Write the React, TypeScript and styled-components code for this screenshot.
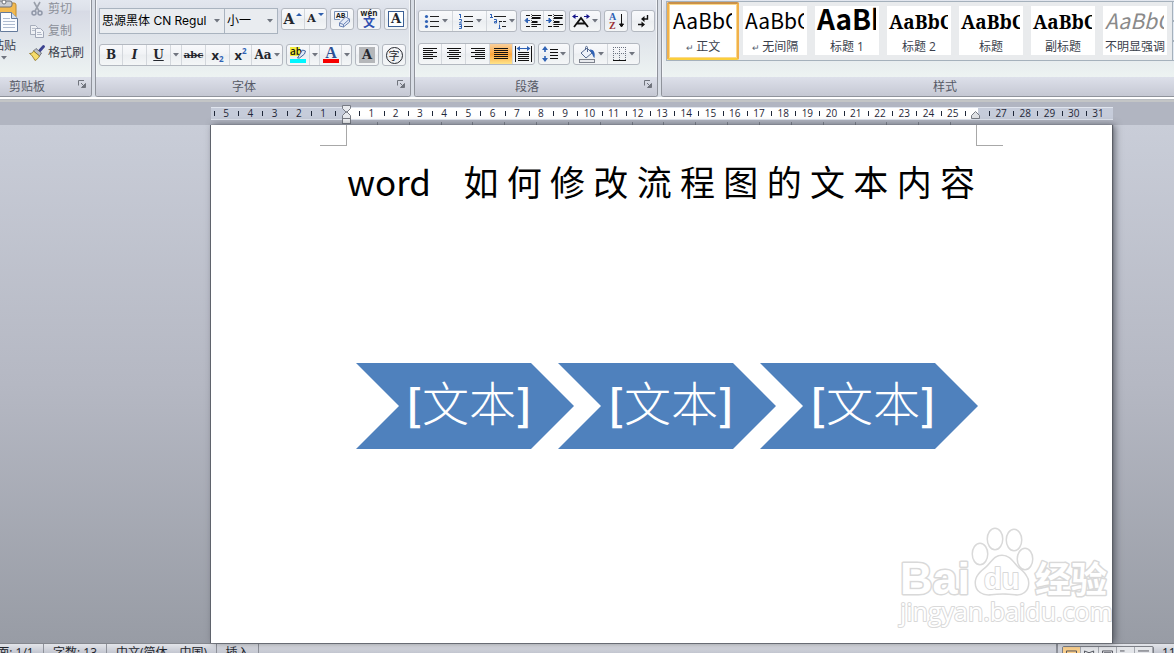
import React from "react";
import styled, { createGlobalStyle, css } from "styled-components";

const UI_FONT = '"Open Sans", "Noto Sans CJK SC", sans-serif';

const GlobalStyle = createGlobalStyle`
  *, *::before, *::after { box-sizing: border-box; }
  body { margin: 0; font-family: ${UI_FONT}; font-size: 12px; color: #3b3f4c; }
  button, select { font: inherit; color: inherit; }
`;

const Window = styled.div`
  display: flex;
  flex-direction: column;
  height: 100vh;
  overflow: hidden;
`;

/* ---------- Ribbon ---------- */

const Ribbon = styled.header`
  display: flex;
  gap: 3px;
  flex: none;
  height: 102px;
  margin-left: -20px;
  padding-bottom: 5px;
  overflow: hidden;
  background: linear-gradient(#d9dee6 0 97px, #ffffff 97px 99px, #b9bdc2 99px 100px, #c3c5c6 100px);
`;

const Group = styled.section<{ $width: number; $grow?: boolean }>`
  display: flex;
  flex-direction: column;
  flex: ${(p) => (p.$grow ? 1 : 0)} 0 ${(p) => p.$width}px;
  border: solid #8f939b;
  border-width: 0 1px 1px;
  border-radius: 0 0 3px 3px;
  overflow: hidden;
  background: linear-gradient(#e3e7ef 0, #dde1ea 10px, #d7dae5 11px, #e4e9ed 50px, #edf3f2 77px);
  box-shadow: inset 1px 0 #f3f5f8, inset -1px 0 #f3f5f8;
`;

const GroupBody = styled.div<{ $top: number; $gap: number }>`
  display: flex;
  flex-direction: column;
  height: 77px;
  gap: ${(p) => p.$gap}px;
  padding: ${(p) => p.$top}px 3px 0;
`;

const GroupFooter = styled.div`
  display: flex;
  align-items: center;
  height: 19px;
  padding-right: 5px;
  background: linear-gradient(#dde0ea, #c5c8d3);
`;

const GroupTitle = styled.h2`
  flex: 1;
  margin: 0;
  padding-right: 5px;
  font-size: 12px;
  font-weight: 400;
  line-height: 18px;
  text-align: center;
  color: #565a66;
`;

const Launcher = styled.button`
  display: flex;
  width: 8px;
  height: 14px;
  padding: 0;
  border: 0;
  background: none;
`;

const ToolRow = styled.div`
  display: flex;
  align-items: flex-start;
  gap: 3px;
`;

const Strip = styled.div`
  display: flex;
  flex: none;
  height: 22px;
  border: 1px solid #b3b8c0;
  border-radius: 3px;
  overflow: hidden;
  background: linear-gradient(#f8f9fb, #f1f3f6 45%, #ebeef1 50%, #f4f6f7);
`;

const Tool = styled.button<{ $width?: number; $active?: boolean; $join?: boolean }>`
  display: flex;
  align-items: center;
  justify-content: center;
  gap: 2px;
  width: ${(p) => p.$width ?? 22}px;
  padding: 0;
  border: 0;
  background: none;
  color: #23262d;
  line-height: 20px;
  ${(p) => !p.$join && css`& + & { border-left: 1px solid #d3d7dc; }`}
  ${(p) =>
    p.$active &&
    css`
      background: linear-gradient(#f9cf9c, #fdb04d 45%, #fba33a 50%, #ffe48a);
    `}
  svg { flex: none; }
`;

const Letter = styled.span<{ $size?: number; $italic?: boolean; $line?: string; $sans?: boolean }>`
  font-family: ${(p) => (p.$sans ? UI_FONT : '"DejaVu Serif", serif')};
  font-size: ${(p) => p.$size ?? 12}px;
  font-weight: 700;
  font-style: ${(p) => (p.$italic ? "italic" : "normal")};
  text-decoration: ${(p) => p.$line ?? "none"};
  white-space: nowrap;
`;

const SubSup = styled.span<{ $up?: boolean }>`
  align-self: ${(p) => (p.$up ? "flex-start" : "flex-end")};
  margin-left: -2px;
  font-size: 8px;
  font-weight: 700;
  line-height: 12px;
  color: #2f62b5;
`;

const Clipboard = styled.div`
  display: flex;
  height: 77px;
  padding-left: 5px;
`;

const PasteButton = styled.button`
  display: flex;
  flex-direction: column;
  align-items: center;
  width: 36px;
  padding: 0;
  border: 0;
  background: none;
  line-height: 20px;
  white-space: nowrap;
`;

const ClipList = styled.div`
  display: flex;
  flex-direction: column;
  margin-top: -2px;
  padding-left: 7px;
`;

const ClipButton = styled.button<{ $muted?: boolean }>`
  display: flex;
  align-items: center;
  gap: 3px;
  height: 22px;
  padding: 0;
  border: 0;
  background: none;
  line-height: 18px;
  color: ${(p) => (p.$muted ? "#8c9099" : "#3b3f4c")};
`;

const Combos = styled.div`
  display: flex;
`;

const ComboBox = styled.label<{ $width: number }>`
  display: flex;
  align-items: center;
  width: ${(p) => p.$width}px;
  height: 26px;
  padding-right: 4px;
  border: 1px solid #a9b3bf;
  background: #e9ecf0;
  & + & { border-left: 0; }
`;

const ComboSelect = styled.select`
  flex: 1;
  min-width: 0;
  height: 24px;
  padding: 0 0 2px 2px;
  border: 0;
  appearance: none;
  background: none;
  color: #000;
  font-family: Inter, "Noto Sans CJK SC", sans-serif;
  text-overflow: clip;
`;

const Arrow = () => (
  <svg width="6" height="4" viewBox="0 0 6 4" aria-hidden="true">
    <path d="M0 0h6L3 3.4z" fill="#70757f" />
  </svg>
);

const LauncherIcon = () => (
  <svg width="8" height="8" viewBox="0 0 8 8" aria-hidden="true">
    <path d="M.5 5.500V.5H6" fill="none" stroke="#70747d" />
    <path d="M3 3l3 3M7.500 3.500v4h-4z" fill="#70747d" stroke="#70747d" />
  </svg>
);

/* ---------- Icons ---------- */

const PasteIcon = () => (
  <svg width="36" height="36" viewBox="4 0 36 36" aria-hidden="true">
    <rect x="8" y="3" width="26" height="26" rx="2" fill="#f2b950" stroke="#c08a2e" />
    <rect x="15" y="1" width="15" height="6" rx="2" fill="#c8ccd3" stroke="#6d7179" />
    <circle cx="22" cy="2" r="2" fill="#fff" stroke="#6d7179" />
    <path d="M18.500 12.500h11l6 6v13h-17z" fill="#fafcff" stroke="#647a9b" />
    <path d="M29.500 12.500v6h6" fill="#d5dfee" stroke="#647a9b" />
    <path d="M21 18.500h7M21 21.500h12M21 24.500h12M21 27.500h12" stroke="#aebbd0" />
  </svg>
);

const CutIcon = () => (
  <svg width="16" height="16" viewBox="0 0 16 16" aria-hidden="true">
    <path d="M5 1l5 9M11 1L6 10" stroke="#9aa0ab" strokeWidth="1.600" fill="none" />
    <circle cx="5" cy="12" r="2" fill="none" stroke="#9097a8" strokeWidth="1.500" />
    <circle cx="11" cy="12" r="2" fill="none" stroke="#9097a8" strokeWidth="1.500" />
  </svg>
);

const CopyIcon = () => (
  <svg width="16" height="16" viewBox="0 0 16 16" aria-hidden="true">
    <path d="M1.500 2.500h5l2 2v7h-7z" fill="#eef0f4" stroke="#a6adbb" />
    <path d="M3 5.500h3M3 7.500h3" stroke="#b7bdc9" />
    <path d="M6.500 5.500h5l3 3v6h-8z" fill="#f2f4f8" stroke="#a0a7b7" />
    <path d="M8 9.500h4M8 11.500h5" stroke="#b0b7c6" />
  </svg>
);

const BrushIcon = () => (
  <svg width="16" height="16" viewBox="0 0 16 16" aria-hidden="true">
    <path d="M14.500 1.500L10.500 6" stroke="#3c4390" strokeWidth="2.800" strokeLinecap="round" />
    <path d="M7 3.500l5.500 4.500-2 3-6-5z" fill="#b9bdc6" stroke="#5b5f69" strokeWidth=".8" />
    <path d="M4.500 6l6 5C9.500 13 8 14.500 6 15.500 4 12 2.500 9.500 .5 8.500 3 8.500 4 7.500 4.500 6z" fill="#f5dc6b" stroke="#8d7421" strokeWidth=".8" />
  </svg>
);

const GrowIcon = ({ down }: { down?: boolean }) => (
  <svg width="6" height="14" viewBox="0 0 6 14" aria-hidden="true">
    <path d={down ? "M0 1h6L3 4z" : "M0 4h6L3 1z"} fill="#2f5fae" />
  </svg>
);

const ClearFormatIcon = () => (
  <svg width="18" height="18" viewBox="0 0 18 18" aria-hidden="true">
    <path d="M1.500 9.500v-8h13v6M1.500 9.500H7" fill="#f5f8fc" stroke="#7890b5" />
    <text x="3" y="8" fontSize="7" fontWeight="700" fontFamily="Open Sans" fill="#222">AB</text>
    <path d="M6.500 13l6-6 4 2v3l-6 5-4-1z" fill="#e5ebf7" stroke="#6a83b5" />
    <path d="M6.500 13l4 1.500 6-5.500M10.500 14.500V17" fill="none" stroke="#6a83b5" />
  </svg>
);

const PhoneticIcon = () => (
  <svg width="20" height="20" viewBox="0 0 20 20" aria-hidden="true">
    <text x="10" y="7" textAnchor="middle" fontSize="8" fontWeight="700" fontFamily="Open Sans" fill="#222">wén</text>
    <text x="10" y="18" textAnchor="middle" fontSize="12" fontWeight="700" fontFamily="Noto Sans CJK SC" fill="#2f4fb0">文</text>
  </svg>
);

const BoxedLetter = styled.span<{ $fill: string; $line: string }>`
  width: 16px;
  height: 16px;
  border: 1px solid ${(p) => p.$line};
  background: ${(p) => p.$fill};
  font: 700 13px/14px "DejaVu Serif", serif;
  text-align: center;
`;

const CircledGlyph = styled.span`
  width: 17px;
  height: 17px;
  border: 1px solid #23262d;
  border-radius: 50%;
  font: 400 11px/14px "Noto Sans CJK SC", sans-serif;
  text-align: center;
`;

const HighlightIcon = () => (
  <svg width="18" height="18" viewBox="0 0 18 18" aria-hidden="true">
    <rect x="1" y="1" width="10" height="9" fill="#f4f03c" />
    <text x="1" y="9" fontSize="10" fontWeight="600" fontFamily="Open Sans" fill="#111">ab</text>
    <path d="M8.500 12l5-8 3 1-1 3-5 4z" fill="#dfe8f7" stroke="#44659f" />
    <rect x="1" y="13" width="16" height="4" fill="#00f6ff" />
  </svg>
);

const FontColorIcon = () => (
  <svg width="18" height="18" viewBox="0 0 18 18" aria-hidden="true">
    <text x="9" y="12" textAnchor="middle" fontSize="16" fontWeight="700" fontFamily="Liberation Serif" fill="#2d4f95">A</text>
    <rect x="1" y="13" width="16" height="4" fill="#f60000" />
  </svg>
);

const LinesIcon = ({ rows }: { rows: [number, number][] }) => (
  <svg width="16" height="16" viewBox="0 0 16 16" aria-hidden="true">
    {rows.map(([x, w], i) => (
      <rect key={i} x={x} y={2 + i * 2} width={w} height="1" fill="#111" />
    ))}
  </svg>
);

const BulletsIcon = () => (
  <svg width="16" height="16" viewBox="0 0 16 16" aria-hidden="true">
    <g fill="#2f62b5"><circle cx="2.500" cy="3.500" r="1.600" /><circle cx="2.500" cy="8.500" r="1.600" /><circle cx="2.500" cy="13.500" r="1.600" /></g>
    <path d="M6 3.500h9M6 8.500h9M6 13.500h9" stroke="#222" />
  </svg>
);

const NumbersIcon = () => (
  <svg width="16" height="18" viewBox="0 0 16 18" aria-hidden="true">
    <path d="M2.500 2v4M1 2.500h1.500" fill="none" stroke="#2f62b5" />
    <path d="M1 7.500h2.500v1.500L1.500 11h2.500" fill="none" stroke="#2f62b5" />
    <path d="M1 12.500h2.500v4H1M1.500 14.500h2" fill="none" stroke="#2f62b5" />
    <path d="M6 4.500h9M6 9.500h9M6 14.500h9" stroke="#222" />
  </svg>
);

const MultiLevelIcon = () => (
  <svg width="18" height="18" viewBox="0 0 18 18" aria-hidden="true">
    <g fill="none" stroke="#2f62b5">
      <path d="M2.500 2v4M1 2.500h1.500M1 5.500h3" />
      <path d="M5 7.500h2.500v3.500H5.500V9.500h2" />
      <path d="M10.500 12.500v4M10.500 10.500v1M9.500 16.500h2" />
    </g>
    <path d="M5 4.500h12M10 9.500h3M14 9.500h3M13 14.500h4" stroke="#222" />
  </svg>
);

const IndentIcon = ({ right }: { right?: boolean }) => (
  <svg width="17" height="16" viewBox="0 0 17 16" aria-hidden="true">
    <path d="M2 2.500h4M2 13.500h4M8 2.500h9M8 5h9M8 9h6M8 11.500h9M8 13.500h5" stroke="#111" />
    <path d="M8 5h8M8 9h5" stroke="#111" strokeWidth="2" />
    <path d="M7.500 1v14" stroke="#666" strokeDasharray="1 1" />
    <path d={right ? "M0 7.500h3M5.500 7.500L3 5v5z" : "M6 7.500H4M1 7.500L3.500 5v5z"} fill="#2f62b5" stroke="#2f62b5" />
  </svg>
);

const CjkLayoutIcon = () => (
  <svg width="18" height="16" viewBox="0 0 18 16" aria-hidden="true">
    <path d="M2 14l7-9 7 9M5 10.500h8" fill="none" stroke="#111" strokeWidth="1.800" />
    <path d="M1 3.500h5M12 3.500h5" stroke="#15158a" />
    <path d="M0 3.500L3.500 1v5zM18 3.500L14.500 1v5z" fill="#15158a" />
  </svg>
);

const SortIcon = () => (
  <svg width="17" height="18" viewBox="0 0 17 18" aria-hidden="true">
    <g fontSize="10" fontWeight="700" fontFamily="Liberation Serif"><text x="1" y="8" fill="#2f62b5">A</text><text x="1" y="17" fill="#9b2f33">Z</text></g>
    <path d="M13.500 2v12M11.500 12l2 3 2-3z" fill="#111" stroke="#111" />
  </svg>
);

const MarksIcon = () => (
  <svg width="14" height="16" viewBox="0 0 14 16" aria-hidden="true">
    <path d="M11.500 2v4H6M2 11.500h4" fill="none" stroke="#111" strokeWidth="1.400" />
    <path d="M5 6l3.500-3v6zM9 11.500L5.500 8.500v6z" fill="#111" />
  </svg>
);

const DistributeIcon = () => (
  <svg width="17" height="18" viewBox="0 0 17 18" aria-hidden="true">
    <path d="M.5 1v16M16.500 1v16M3 7.500h11M3 9.500h11M3 11.500h11M3 13.500h11M3 15.500h11" stroke="#111" />
    <path d="M3 3.500h11" stroke="#2f62b5" />
    <path d="M1.500 3.500L5 1v5zM15.500 3.500L12 1v5z" fill="#2f62b5" />
  </svg>
);

const SpacingIcon = () => (
  <svg width="16" height="16" viewBox="0 0 16 16" aria-hidden="true">
    <path d="M3 0l3 4H0zM3 16l3-4H0z" fill="#2f62b5" />
    <path d="M3 3v3M3 10v3" stroke="#2f62b5" strokeWidth="1.600" />
    <path d="M8 3.500h8M8 6.500h8M8 9.500h8M8 12.500h8" stroke="#111" />
  </svg>
);

const ShadingIcon = () => (
  <svg width="18" height="18" viewBox="0 0 18 18" aria-hidden="true">
    <path d="M3 8l6-5 5 5-6 5z" fill="#eef2fa" stroke="#55698f" />
    <path d="M9.500 7V2.500c0-1.500-2-1.500-2 0V5" fill="none" stroke="#55698f" />
    <path d="M11.500 4.500c4-.5 6 2.500 5 8.500-1.500-.5-1.500-3-3-5z" fill="#2f62b5" />
    <rect x="1.500" y="14.500" width="15" height="3" fill="#e8eaee" stroke="#7e838e" />
  </svg>
);

const BordersIcon = () => (
  <svg width="14" height="14" viewBox="0 0 14 14" aria-hidden="true">
    <path d="M.5 0v13M6.500 0v13M12.500 0v13M0 .5h13M0 6.500h13" stroke="#6b7280" strokeDasharray="1 1" />
    <path d="M0 13.500h13" stroke="#111" />
  </svg>
);

/* ---------- Styles gallery ---------- */

const GalleryRow = styled.div`
  display: flex;
  height: 60px;
  margin: 1px 0 0 1px;
`;

const Gallery = styled.div`
  display: flex;
  flex: 0 0 507px;
  border: 1px solid #a5b1bc;
  background: #e9ebed;
  overflow: hidden;
`;

const GalleryScroll = styled.div`
  display: flex;
  flex-direction: column;
  width: 16px;
`;

const ScrollButton = styled.button`
  display: flex;
  flex: 1;
  align-items: center;
  justify-content: center;
  padding: 0;
  border: 1px solid #a5b1bc;
  border-left: 0;
  background: #e3eaf3;
`;

const StyleCard = styled.button<{ $selected?: boolean }>`
  display: flex;
  flex-direction: column;
  flex: 0 0 72px;
  height: 58px;
  padding: 0;
  border: 4px solid transparent;
  border-bottom-width: 5px;
  background: #fff padding-box;
  ${(p) =>
    p.$selected &&
    css`
      padding: 2px;
      border: 2px solid;
      border-color: #c9904a #f0b04c #fbcf3c;
      border-radius: 2px;
      box-shadow: inset 0 0 0 1px #fbd98d;
    `}
`;

const Sample = styled.span<{ $kind: "body" | "heavy" | "serif" | "soft" }>`
  width: 61px;
  height: 31px;
  padding-left: 2px;
  overflow: hidden;
  text-align: left;
  white-space: nowrap;
  font: 400 21px/29px "Noto Sans CJK SC", sans-serif;
  color: #000;
  ${(p) => p.$kind === "heavy" && css`font-size: 28px; line-height: 25px; font-weight: 700;`}
  ${(p) => p.$kind === "serif" && css`font: 700 19px/32px "Noto Serif", "DejaVu Serif Condensed", serif;`}
  ${(p) => p.$kind === "soft" && css`font-style: italic; color: #8a8a8a;`}
`;

const StyleName = styled.span`
  align-self: stretch;
  height: 18px;
  line-height: 20px;
  text-align: center;
  white-space: nowrap;
  color: #3b3f4c;
`;

const Return = styled.small`
  font-size: 9px;
  color: #55606f;
`;

/* ---------- Ruler ---------- */

const RulerArea = styled.div`
  flex: none;
  height: 23px;
  padding: 5px 61px 0 211px;
  background: #b1b5c1;
`;

const Ruler = styled.div`
  position: relative;
  display: flex;
  height: 13px;
  padding: 0 3px;
  border: solid #dfe4ee;
  border-width: 1px 0;
  background: linear-gradient(90deg, #c6ccda 15%, #fff 15% 85%, #c6ccda 85%);
`;

const RulerCell = styled.span`
  position: relative;
  flex: 1 1 0;
  text-align: center;
  font-size: 10px;
  line-height: 11px;
  color: #1f2738;
  &::before {
    content: "";
    position: absolute;
    left: 0;
    top: 3px;
    width: 1px;
    height: 5px;
    background: #1f2738;
  }
`;

const TabTicks = styled.div`
  display: flex;
  height: 5px;
  padding: 2px 131px 0 135px;
`;

const TabTick = styled.i`
  flex: 1 1 0;
  height: 3px;
  & + & { border-left: 1px solid #7c818c; }
`;

const Marker = styled.svg<{ $side: "left" | "right" }>`
  position: absolute;
  top: -4px;
  ${(p) => (p.$side === "left" ? "left: calc(15% - 4px);" : "left: calc(85% - 7px);")}
`;

/* ---------- Document ---------- */

const Workspace = styled.main`
  display: flex;
  flex: 1;
  min-height: 0;
  padding: 0 62px 0 210px;
  background: linear-gradient(#c9cdd8, #b5b8c3 50%, #989ca5);
`;

const Page = styled.article`
  position: relative;
  flex: 1;
  min-width: 0;
  border-left: 1px solid #5f636c;
  background: #fff;
  box-shadow: 1px 0 1px #5b5e66, 3px 0 7px rgba(60, 63, 72, 0.7);
`;

const Corners = styled.div`
  display: flex;
  justify-content: space-between;
  padding: 0 109px;
`;

const Corner = styled.i<{ $side: "left" | "right" }>`
  width: 27px;
  height: 21px;
  border-bottom: 1px solid #a8a8a8;
  border-${(p) => (p.$side === "left" ? "right" : "left")}: 1px solid #a8a8a8;
`;

const Title = styled.h1`
  margin: 8px 137px 0 136px;
  font: 400 35px/54px "Noto Sans CJK SC", sans-serif;
  text-align: justify;
  text-align-last: justify;
  color: #000;
`;

const Process = styled.div`
  display: flex;
  margin: 155px 134px 0 145px;
`;

const Chevron = styled.div`
  flex: 1 1 0;
  height: 86px;
  padding-left: 8px;
  clip-path: polygon(0 0, calc(100% - 43px) 0, 100% 50%, calc(100% - 43px) 100%, 0 100%, 43px 50%);
  background: #4f81bd;
  color: #fff;
  font: 300 47px/76px "Noto Sans CJK SC", sans-serif;
  text-align: center;
  white-space: nowrap;
  & + & { margin-left: -16px; }
`;

const Bracket = styled.span`
  font-size: 42px;
  font-weight: 700;
`;

const Watermark = styled.svg`
  position: absolute;
  right: 0;
  bottom: 11px;
`;

/* ---------- Status bar ---------- */

const StatusBar = styled.footer`
  display: flex;
  flex: none;
  height: 10px;
  margin-left: -24px;
  overflow: hidden;
  border-top: 1px solid #84878e;
  background: linear-gradient(#e3e5ea, #c3c6d0);
`;

const StatusItem = styled.span<{ $width: number }>`
  display: flex;
  justify-content: center;
  flex: 0 0 ${(p) => p.$width}px;
  height: 20px;
  border-right: 1px solid #8f929a;
  line-height: 18px;
  white-space: nowrap;
  color: #22252c;
`;

const StatusSpacer = styled.span`
  flex: 1;
  border-right: 2px solid #8f929a;
`;

const Views = styled.div`
  display: flex;
  height: 20px;
  margin: 2px 8px 0 4px;
  border: 1px solid #7d8087;
  border-radius: 2px;
`;

const ViewButton = styled.button<{ $active?: boolean }>`
  display: flex;
  width: 18px;
  padding: 3px 3px 0;
  border: 0;
  border-right: 1px solid #a5a8af;
  background: ${(p) => (p.$active ? "#fbd08d" : "#e4e6ea")};
`;

const Zoom = styled.span`
  width: 12px;
  line-height: 18px;
  overflow: hidden;
  color: #22252c;
`;

const VIEW_PATHS = [
  "M.5 12V.5h11V12M3 3.500h6M3 5.500h6",
  "M.5 12V.5l5 2 5-2V12M5.500 2v10M2 4l2 1M9 4L7 5",
  "M.5 12V.5h11V12M2 2.500h8M3 4.500h5",
  "M0 .5h5M3 3.500h9M5 5.500h7",
  "M0 .5h12M0 3.500h12M0 6.500h12",
];

const STYLES: { name: string; kind: "body" | "heavy" | "serif" | "soft"; mark?: boolean; selected?: boolean }[] = [
  { name: "正文", kind: "body", mark: true, selected: true },
  { name: "无间隔", kind: "body", mark: true },
  { name: "标题 1", kind: "heavy" },
  { name: "标题 2", kind: "serif" },
  { name: "标题", kind: "serif" },
  { name: "副标题", kind: "serif" },
  { name: "不明显强调", kind: "soft" },
];

const RULER = Array.from({ length: 37 }, (_, i) => i - 5);
const FULL: [number, number] = [1, 14];

const Footer = ({ title }: { title: string }) => (
  <GroupFooter>
    <GroupTitle>{title}</GroupTitle>
    <Launcher aria-label={`${title}选项`}>
      <LauncherIcon />
    </Launcher>
  </GroupFooter>
);

export default function App() {
  return (
    <Window>
      <GlobalStyle />
      <Ribbon>
        <Group $width={112}>
          <Clipboard>
            <PasteButton>
              <PasteIcon />
              粘贴
              <Arrow />
            </PasteButton>
            <ClipList>
              <ClipButton $muted><CutIcon />剪切</ClipButton>
              <ClipButton $muted><CopyIcon />复制</ClipButton>
              <ClipButton><BrushIcon />格式刷</ClipButton>
            </ClipList>
          </Clipboard>
          <Footer title="剪贴板" />
        </Group>

        <Group $width={316}>
          <GroupBody $top={8} $gap={10}>
            <ToolRow>
              <Combos>
                <ComboBox $width={126}>
                  <ComboSelect aria-label="字体"><option>思源黑体 CN Regul</option></ComboSelect>
                  <Arrow />
                </ComboBox>
                <ComboBox $width={53}>
                  <ComboSelect aria-label="字号"><option>小一</option></ComboSelect>
                  <Arrow />
                </ComboBox>
              </Combos>
              <Strip>
                <Tool aria-label="增大字体"><Letter $size={14}>A</Letter><GrowIcon /></Tool>
                <Tool aria-label="缩小字体"><Letter $size={11}>A</Letter><GrowIcon down /></Tool>
              </Strip>
              <Strip><Tool aria-label="清除格式"><ClearFormatIcon /></Tool></Strip>
              <Strip><Tool aria-label="拼音指南"><PhoneticIcon /></Tool></Strip>
              <Strip><Tool aria-label="字符边框"><BoxedLetter $fill="#fff" $line="#3b5f95">A</BoxedLetter></Tool></Strip>
            </ToolRow>
            <ToolRow>
              <Strip>
                <Tool><Letter>B</Letter></Tool>
                <Tool $width={24}><Letter $italic>I</Letter></Tool>
                <Tool $width={24}><Letter $line="underline">U</Letter></Tool>
                <Tool $width={11} $join aria-label="下划线类型"><Arrow /></Tool>
                <Tool $width={24}><Letter $size={10} $line="line-through">abc</Letter></Tool>
                <Tool $width={24} aria-label="下标"><Letter $sans $size={13}>x</Letter><SubSup>2</SubSup></Tool>
                <Tool $width={22} aria-label="上标"><Letter $sans $size={13}>x</Letter><SubSup $up>2</SubSup></Tool>
                <Tool $width={31}><Letter>Aa</Letter><Arrow /></Tool>
              </Strip>
              <Strip>
                <Tool aria-label="突出显示"><HighlightIcon /></Tool>
                <Tool $width={10} $join aria-label="突出显示颜色"><Arrow /></Tool>
                <Tool aria-label="字体颜色"><FontColorIcon /></Tool>
                <Tool $width={10} $join aria-label="更多字体颜色"><Arrow /></Tool>
              </Strip>
              <Strip><Tool aria-label="字符底纹"><BoxedLetter $fill="#b5b7ba" $line="#b5b7ba">A</BoxedLetter></Tool></Strip>
              <Strip><Tool aria-label="带圈字符"><CircledGlyph>字</CircledGlyph></Tool></Strip>
            </ToolRow>
          </GroupBody>
          <Footer title="字体" />
        </Group>

        <Group $width={244}>
          <GroupBody $top={10} $gap={11}>
            <ToolRow>
              <Strip>
                <Tool $width={33} aria-label="项目符号"><BulletsIcon /><Arrow /></Tool>
                <Tool $width={34} aria-label="编号"><NumbersIcon /><Arrow /></Tool>
                <Tool $width={30} aria-label="多级列表"><MultiLevelIcon /><Arrow /></Tool>
              </Strip>
              <Strip>
                <Tool aria-label="减少缩进量"><IndentIcon /></Tool>
                <Tool aria-label="增加缩进量"><IndentIcon right /></Tool>
              </Strip>
              <Strip><Tool $width={30} aria-label="中文版式"><CjkLayoutIcon /><Arrow /></Tool></Strip>
              <Strip><Tool aria-label="排序"><SortIcon /></Tool></Strip>
              <Strip><Tool aria-label="显示编辑标记"><MarksIcon /></Tool></Strip>
            </ToolRow>
            <ToolRow>
              <Strip>
                <Tool $width={22} aria-label="左对齐"><LinesIcon rows={[FULL, [1, 10], FULL, [1, 10], FULL, [1, 10]]} /></Tool>
                <Tool $width={24} aria-label="居中"><LinesIcon rows={[FULL, [3, 10], FULL, [3, 10], FULL, [3, 10]]} /></Tool>
                <Tool $width={24} aria-label="右对齐"><LinesIcon rows={[FULL, [5, 10], FULL, [5, 10], FULL, [5, 10]]} /></Tool>
                <Tool $width={23} $active aria-label="两端对齐"><LinesIcon rows={[FULL, FULL, FULL, FULL, FULL, FULL]} /></Tool>
                <Tool $width={22} aria-label="分散对齐"><DistributeIcon /></Tool>
              </Strip>
              <Strip><Tool $width={30} aria-label="行距"><SpacingIcon /><Arrow /></Tool></Strip>
              <Strip>
                <Tool $width={33} aria-label="底纹"><ShadingIcon /><Arrow /></Tool>
                <Tool $width={32} aria-label="边框"><BordersIcon /><Arrow /></Tool>
              </Strip>
            </ToolRow>
          </GroupBody>
          <Footer title="段落" />
        </Group>

        <Group $width={586} $grow>
          <GroupBody $top={0} $gap={0}>
            <GalleryRow>
              <Gallery>
                {STYLES.map((s) => (
                  <StyleCard key={s.name} $selected={s.selected}>
                    <Sample $kind={s.kind}>AaBbC</Sample>
                    <StyleName>
                      {s.mark && <Return>↵ </Return>}
                      {s.name}
                    </StyleName>
                  </StyleCard>
                ))}
              </Gallery>
              <GalleryScroll>
                <ScrollButton aria-label="上一行"><Arrow /></ScrollButton>
                <ScrollButton aria-label="下一行"><Arrow /></ScrollButton>
                <ScrollButton aria-label="其他"><Arrow /></ScrollButton>
              </GalleryScroll>
            </GalleryRow>
          </GroupBody>
          <Footer title="样式" />
        </Group>
      </Ribbon>

      <RulerArea>
        <Ruler>
          {RULER.map((n) => (
            <RulerCell key={n}>{n === 0 || n === 26 ? "" : Math.abs(n)}</RulerCell>
          ))}
          <Marker $side="left" width="10" height="22" viewBox="0 0 10 22" aria-hidden="true">
            <path d="M.5 1.500h8v3l-4 4-4-4zM4.500 7.500l4 4v3h-8v-3z" fill="#e8eaee" stroke="#777b84" />
            <rect x=".5" y="14.500" width="8" height="5" fill="#f3f4f6" stroke="#777b84" />
          </Marker>
          <Marker $side="right" width="10" height="22" viewBox="0 0 10 22" aria-hidden="true">
            <path d="M4.500 7.500l4 4v3h-8v-3z" fill="#e0e2e5" stroke="#777b84" />
          </Marker>
        </Ruler>
        <TabTicks>
          {Array.from({ length: 20 }, (_, i) => (
            <TabTick key={i} />
          ))}
        </TabTicks>
      </RulerArea>

      <Workspace>
        <Page>
          <Corners>
            <Corner $side="left" />
            <Corner $side="right" />
          </Corners>
          <Title>word{"\u00a0 "}如何修改流程图的文本内容</Title>
          <Process>
            {[1, 2, 3].map((step) => (
              <Chevron key={step}>
                <Bracket>[</Bracket>文本<Bracket>]</Bracket>
              </Chevron>
            ))}
          </Process>
          <Watermark width="216" height="110" viewBox="0 0 216 110" role="img" aria-label="Baidu 经验">
            <g fill="#fff" stroke="#d9d9d9" strokeWidth="3" strokeLinejoin="round" paintOrder="stroke">
              <ellipse cx="84" cy="32" rx="7" ry="10" />
              <ellipse cx="99" cy="17" rx="7" ry="10" />
              <ellipse cx="118" cy="18" rx="7" ry="10" />
              <ellipse cx="129" cy="37" rx="7" ry="10" />
              <path d="M106 34c8 0 11 7 16 12 6 5 10 9 10 15 0 8-6 12-13 11-9-1-16-1-24 0-8 1-15-3-15-11 0-7 5-11 10-15 6-5 8-12 16-12z" />
              <g fontFamily="Liberation Sans, sans-serif" fontWeight="700">
                <text x="4" y="72" fontSize="45">Bai</text>
                <text x="88" y="67" fontSize="29" strokeWidth="2">du</text>
              </g>
              <text x="139" y="71" fontSize="36" fontWeight="700" fontFamily="Noto Sans CJK SC, sans-serif">经验</text>
              <text x="4" y="99" fontSize="25" strokeWidth="2" fontFamily="Open Sans, sans-serif">jingyan.baidu.com</text>
            </g>
          </Watermark>
        </Page>
      </Workspace>

      <StatusBar>
        <StatusItem $width={68}>页面: 1/1</StatusItem>
        <StatusItem $width={63}>字数: 13</StatusItem>
        <StatusItem $width={110}>中文(简体，中国)</StatusItem>
        <StatusItem $width={42}>插入</StatusItem>
        <StatusSpacer />
        <Views>
          {VIEW_PATHS.map((d, i) => (
            <ViewButton key={i} $active={i === 0} aria-label={`视图 ${i + 1}`}>
              <svg width="12" height="12" viewBox="0 0 12 12" aria-hidden="true">
                <path d={d} fill="none" stroke="#4a4d55" />
              </svg>
            </ViewButton>
          ))}
        </Views>
        <Zoom>110%</Zoom>
      </StatusBar>
    </Window>
  );
}
